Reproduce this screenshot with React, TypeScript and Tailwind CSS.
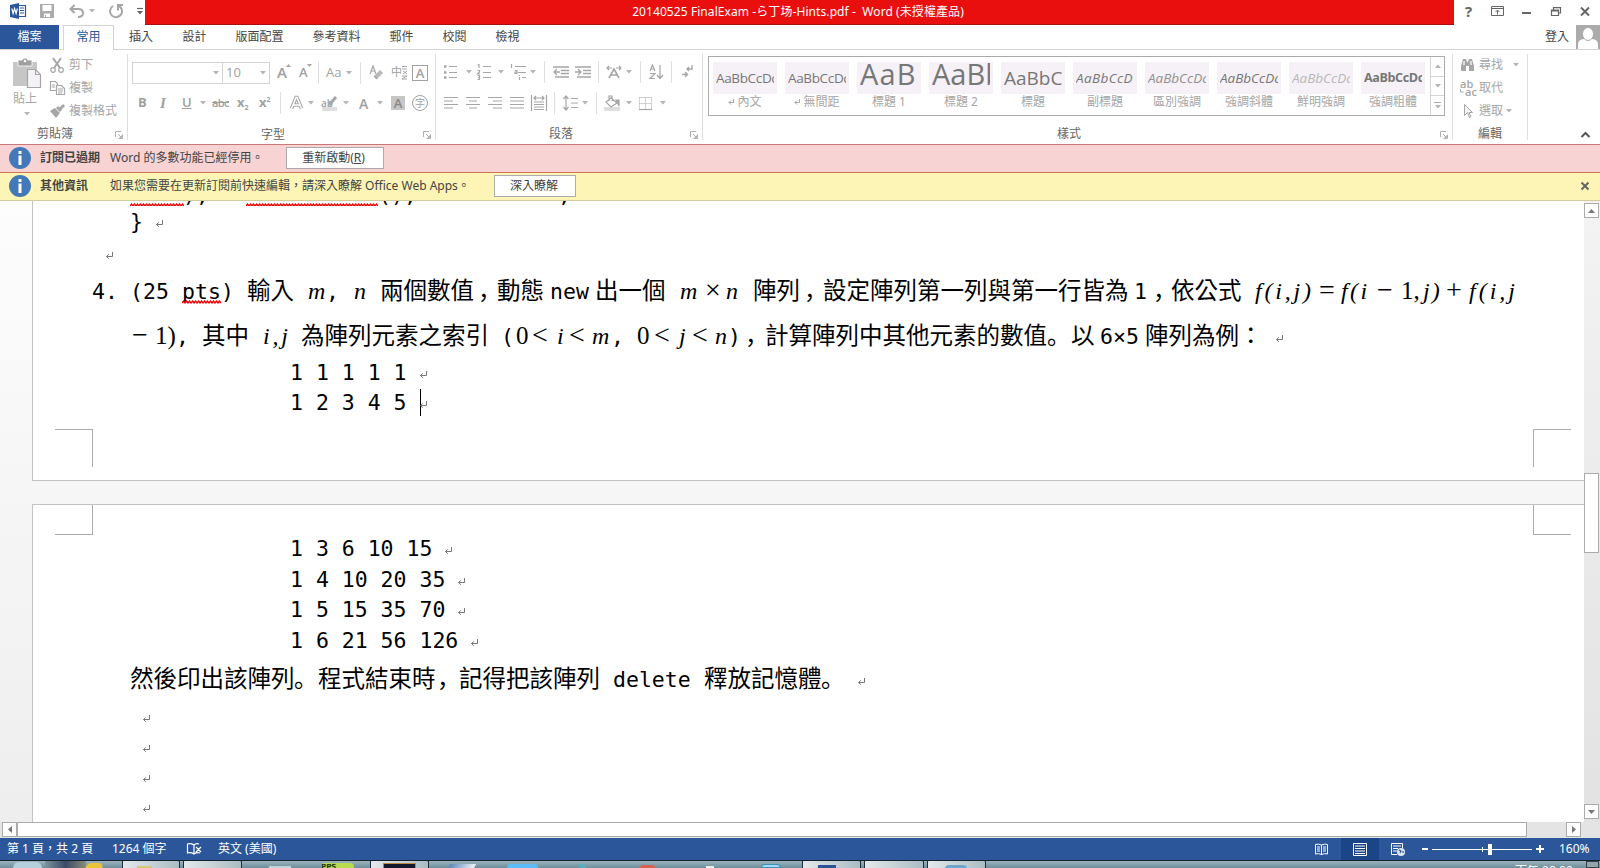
import React from 'react';
import clsx from 'clsx';

// every run of text sits in a cell whose width is the distance to the next one,
// the third entry is the length of a spelling squiggle under it
type Run = [text: string, className: string, squiggle?: number];

const MONO = "font-['DejaVu_Sans_Mono','Noto_Sans_CJK_TC',monospace] text-[21.5px]";
const CJK = "font-['Noto_Sans_CJK_TC',sans-serif] text-[23.5px]";
const PUNCT = "font-['Noto_Sans_CJK_SC',sans-serif] text-[23.5px]";
const MATH = "font-['Liberation_Serif',serif] text-[24px] italic";
const NUM = "font-['Liberation_Serif',serif] text-[25px]";
const OP = "font-['Liberation_Serif',serif] text-[28px]";

const Caret = ({ className = '' }: { className?: string }) => (
  <svg className={clsx('shrink-0', className)} width="6" height="4" viewBox="0 0 6 4">
    <path d="M0 0h6L3 3.5z" fill="#b5b5b5" />
  </svg>
);

const Sep = ({ className = '' }: { className?: string }) => (
  <div className={clsx('h-[22px] w-px shrink-0 bg-[#dedede]', className)} />
);

const Launcher = ({ className = '' }: { className?: string }) => (
  <svg className={clsx('absolute bottom-[1px]', className)} width="8" height="8" viewBox="0 0 8 8" fill="none" stroke="#b0b0b0">
    <path d="M.5 6V.5H6M3 3l3 3M7.5 3.5v4h-4M4.5 6.5h2v-2" />
  </svg>
);

// icon cell: a drawing on its own pixel grid
function Icon({ w, h = 18, className = '', children }: { w: number; h?: number; className?: string; children: React.ReactNode }) {
  return (
    <svg className={clsx('shrink-0 overflow-visible', className)} width={w} height={h} viewBox={`0 0 ${w} ${h}`} fill="none" stroke="#a6a6a6" strokeWidth="1.2">
      {children}
    </svg>
  );
}

const Return = ({ className = '' }: { className?: string }) => (
  <svg className={clsx('shrink-0', className)} width="8" height="8" viewBox="0 0 8 8" fill="none" stroke="#777">
    <path d="M6.5 0v4.5h-6M2.800 2.300L.600 4.500l2.200 2.300" />
  </svg>
);

const Squiggle = ({ length }: { length: number }) => (
  <svg className="absolute bottom-[calc(0.5lh-12px)] left-0" width={length} height="4" viewBox={`0 0 ${length} 4`} fill="none" stroke="#f00000" strokeWidth="1.3">
    <path d={`M0 3${'l1.500-2 1.500 2'.repeat(Math.floor(length / 3))}`} />
  </svg>
);

const Line = ({ runs, className }: { runs: Run[]; className: string }) => (
  <div className={clsx('flex items-baseline whitespace-pre', className)}>
    {runs.map(([text, cls, squiggle], i) =>
      text === '↵' ? (
        <Return key={i} className="-translate-y-px" />
      ) : (
        <span key={i} className={clsx('relative shrink-0', cls)}>
          {text}
          {squiggle && <Squiggle length={squiggle} />}
        </span>
      )
    )}
  </div>
);

// only the feet of this line show under the message bar
const scrolledOut: Run[] = [
  [' ', `${MONO} w-[53px]`, 54],
  [');', `${MONO} w-[63px]`],
  [' ', `${MONO} w-[132px]`, 132],
  ['();', `${MONO} w-[180px]`],
  [';', MONO],
];

const formula: Run[] = [
  ['4.', `${MONO} w-[38px]`],
  ['(25 ', `${MONO} w-[52px]`],
  ['pts', `${MONO} w-[39px]`, 40],
  [')', `${MONO} w-[26px]`],
  ['輸入', `${CJK} w-[61px]`],
  ['m', `${MATH} w-[18px]`],
  [',', `${MONO} w-[28px]`],
  ['n', `${MATH} w-[26px]`],
  ['兩個數值', `${CJK} w-[98px]`],
  ['，', `${PUNCT} w-[19px]`],
  ['動態', `${CJK} w-[53px]`],
  ['new', `${MONO} w-[45px]`],
  ['出一個', `${CJK} w-[85px]`],
  ['m', `${MATH} w-[25px]`],
  ['×', `${OP} w-[21px]`],
  ['n', `${MATH} w-[27px]`],
  ['陣列', `${CJK} w-[51px]`],
  ['，', `${PUNCT} w-[19px]`],
  ['設定陣列第一列與第一行皆為', `${CJK} w-[311px]`],
  ['1', `${MONO} w-[19px]`],
  ['，', `${PUNCT} w-[18px]`],
  ['依公式', `${CJK} w-[84px]`],
  ['f(i,j)', `${MATH} w-[64px] tracking-[2.8px]`],
  ['=', `${OP} w-[22px]`],
  ['f(i', `${MATH} w-[36px] tracking-[2.4px]`],
  ['−', `${OP} w-[24px]`],
  ['1,', `${NUM} w-[22px]`],
  ['j)', `${MATH} w-[23px] tracking-[2px]`],
  ['+', `${OP} w-[23px]`],
  ['f(i,j', `${MATH} tracking-[3px]`],
];

const condition: Run[] = [
  ['−', `${OP} w-[23px]`],
  ['1)', `${NUM} w-[21px]`],
  [',', `${MONO} w-[26px]`],
  ['其中', `${CJK} w-[61px]`],
  ['i,j', `${MATH} w-[38px] tracking-[2.8px]`],
  ['為陣列元素之索引', `${CJK} w-[200px]`],
  ['(', `${MONO} w-[15px]`],
  ['0', `${NUM} w-[16px]`],
  ['<', `${OP} w-[25px]`],
  ['i', `${MATH} w-[12px]`],
  ['<', `${OP} w-[23px]`],
  ['m', `${MATH} w-[19px]`],
  [',', `${MONO} w-[26px]`],
  ['0', `${NUM} w-[17px]`],
  ['<', `${OP} w-[25px]`],
  ['j', `${MATH} w-[13px]`],
  ['<', `${OP} w-[23px]`],
  ['n', `${MATH} w-[13px]`],
  [')', `${MONO} w-[17px]`],
  ['，', `${PUNCT} w-[20px]`],
  ['計算陣列中其他元素的數值', `${CJK} w-[282px]`],
  ['。', `${PUNCT} w-[24px]`],
  ['以', `${CJK} w-[29px]`],
  ['6×5', `${MONO} w-[45px]`],
  ['陣列為例：', `${CJK} w-[131px]`],
  ['↵', ''],
];

const closing: Run[] = [
  ['然後印出該陣列', `${CJK} w-[164px]`],
  ['。', `${PUNCT} w-[24px]`],
  ['程式結束時', `${CJK} w-[119px]`],
  ['，', `${PUNCT} w-[22px]`],
  ['記得把該陣列', `${CJK} w-[154px]`],
  ['delete', `${MONO} w-[91px]`],
  ['釋放記憶體', `${CJK} w-[117px]`],
  ['。', `${PUNCT} w-[37px]`],
  ['↵', ''],
];

const tabs = [
  { label: '插入', cls: 'w-[54px]' },
  { label: '設計', cls: 'w-[53px]' },
  { label: '版面配置', cls: 'w-[77px]' },
  { label: '參考資料', cls: 'w-[77px]' },
  { label: '郵件', cls: 'w-[53px]' },
  { label: '校閱', cls: 'w-[53px]' },
  { label: '檢視', cls: 'w-[53px]' },
];

const styles = [
  { sample: 'AaBbCcDc', name: '內文', mark: true, cls: 'text-[13.5px] leading-[32px]' },
  { sample: 'AaBbCcDc', name: '無間距', mark: true, cls: 'text-[13.5px] leading-[32px]' },
  { sample: 'AaB', name: '標題 1', cls: 'text-[29px] tracking-[1.2px] leading-[24px]' },
  { sample: 'AaBb', name: '標題 2', cls: 'text-[29px] tracking-[0px] leading-[24px]' },
  { sample: 'AaBbC', name: '標題', cls: 'text-[19px] tracking-[0px] leading-[32px]' },
  { sample: 'AaBbCcD', name: '副標題', cls: 'text-[13.5px] italic tracking-[0.4px] leading-[32px]' },
  { sample: 'AaBbCcDc', name: '區別強調', cls: 'text-[13.5px] italic tracking-[0px] text-[#909090] leading-[32px]' },
  { sample: 'AaBbCcDc', name: '強調斜體', cls: 'text-[13.5px] italic tracking-[0px] leading-[32px]' },
  { sample: 'AaBbCcDc', name: '鮮明強調', cls: 'text-[13.5px] italic tracking-[0px] text-[#b8b8b8] leading-[32px]' },
  { sample: 'AaBbCcDc', name: '強調粗體', cls: 'text-[12.5px] font-bold tracking-[-0.35px] leading-[32px]' },
];

function TitleBar() {
  return (
    <div className="flex h-[25px]">
      <div className="flex w-[145px] items-center pb-[3px] pl-[10px]">
        <Icon w={16} h={16} className="mr-[14px]">
          <path d="M8 2.5h7.5v11H8M10 5h4M10 7.5h4M10 10h4" stroke="#2b579a" />
          <path d="M0 2l9-2v16l-9-2z" fill="#2b579a" stroke="none" />
          <path d="M1.8 5.5l1.3 5 1.5-5 1.5 5 1.3-5" stroke="#fff" />
        </Icon>
        <Icon w={14} h={14} className="mr-[15px]">
          <path d="M0 0h14v14H0z" fill="#ababab" stroke="none" />
          <path d="M2.500 1h9v6h-9zM4 9.500h6v3.500H6v-2H5v2H4z" fill="#fff" stroke="none" />
        </Icon>
        <Icon w={15} h={14} className="mr-[5px]">
          <path d="M5.5 1L1.5 5l4 4M2 5h7q5 0 5 4t-5 4" stroke="#a6a6a6" strokeWidth="2" />
        </Icon>
        <Caret className="mr-[14px]" />
        <Icon w={14} h={14} className="mr-[14px]">
          <path d="M4 2A6 6 0 1 0 9 1.5M9 6.5V1h5" stroke="#a6a6a6" strokeWidth="2" />
        </Icon>
        <Icon w={6} h={7}>
          <path d="M0 .5h6" stroke="#666" />
          <path d="M0 3h6L3 6.500z" fill="#666" stroke="none" />
        </Icon>
      </div>
      <div className="w-[1309px] border-b border-[#a81010] bg-[#ea0f0f] pr-[3px] text-center text-[12px] leading-[23px] tracking-[0.08px] text-white">
        20140525 FinalExam -ら丁场-Hints.pdf -&nbsp; Word (未授權產品)
      </div>
      <div className="flex flex-1 items-center pb-[3px] pl-[11px]">
        <span className="w-[26px] text-[15px] font-bold text-[#666]">?</span>
        <Icon w={13} h={10} className="mr-[18px]">
          <path d="M.5.5h12v9H.5zM.5 2.500h12M6.500 8.500V4.500M4.500 6l2-2 2 2" stroke="#666" strokeWidth="1" />
        </Icon>
        <Icon w={9} h={10} className="mr-[20px]"><path d="M0 7h9" stroke="#666" strokeWidth="2" /></Icon>
        <Icon w={10} h={9} className="mr-[19px]">
          <path d="M.5 3h7v5.500h-7zM.5 4h7M2.500 3V.7h7V6H7.500" stroke="#666" />
        </Icon>
        <Icon w={10} h={9}><path d="M1 .5l8 8M9 .5l-8 8" stroke="#666" strokeWidth="2" /></Icon>
      </div>
    </div>
  );
}

function Tabs() {
  return (
    <div className="flex h-[25px] border-b border-[#d4d4d4] text-[12px] leading-[23px] text-[#444]">
      <div className="w-[59px] bg-[#2b579a] text-center text-white">檔案</div>
      <div className="ml-1 h-[25px] w-[51px] border border-b-0 border-[#d4d4d4] bg-white text-center leading-[22px] text-[#2b579a]">常用</div>
      {tabs.map((t) => (
        <div key={t.label} className={clsx('text-center', t.cls)}>{t.label}</div>
      ))}
      <div className="ml-auto w-[31px]">登入</div>
      <svg width="24" height="24" viewBox="0 0 24 24">
        <path d="M0 0h24v24H0z" fill="#ababab" />
        <path d="M2 24v-4q0-6 6-6h8q6 0 6 6v4z" fill="#fff" />
        <ellipse cx="12" cy="9" rx="5.500" ry="6.500" fill="#fff" stroke="#ababab" />
      </svg>
    </div>
  );
}

const GroupLabel = ({ children, className = '' }: { children: string; className?: string }) => (
  <div className={clsx('absolute inset-x-0 bottom-[-2px] text-center text-[12px] leading-[16px] text-[#666]', className)}>{children}</div>
);

function Clipboard() {
  return (
    <div className="relative flex w-[128px] border-r border-[#dedede] text-[12px] text-[#a6a6a6]">
      <div className="flex w-[50px] flex-col items-center pt-[4px]">
        <Icon w={28} h={30} className="ml-[4px]">
          <path d="M0 4h24v24H0z" fill="#c6c6c6" stroke="none" />
          <path d="M5 2h4q3-4 6 0h4v6H5z" fill="#a0a0a0" stroke="#fff" strokeWidth=".8" />
          <circle cx="12" cy="3" r="1.300" fill="#fff" stroke="none" />
          <path d="M14.500 11.500h8l5 5v13h-13z" fill="#f5f2f7" stroke="#a6a6a6" />
          <path d="M22.500 11.500v5h5" />
        </Icon>
        <span className="mt-[3px] leading-[16px]">貼上</span>
        <Caret className="mt-[5px] ml-[3px]" />
      </div>
      <div className="flex flex-col">
        <div className="flex h-[22px] items-center leading-[20px]">
          <Icon w={14} h={15} className="mr-[5px]">
            <path d="M3 0l7 10M11 0L4 10" strokeWidth="2" />
            <circle cx="3" cy="12" r="2.300" /><circle cx="11" cy="12" r="2.300" />
          </Icon>
          剪下
        </div>
        <div className="flex h-[23px] items-center leading-[20px]">
          <Icon w={15} h={14} className="mr-[4px]">
            <path d="M.5.500h5l2 2v7h-7zM2 4h3M2 6h3" />
            <path d="M6.500 4.500h5l3 3v6h-8z" fill="#fff" /><path d="M8 8h5M8 10h5M8 12h4" />
          </Icon>
          複製
        </div>
        <div className="flex h-[23px] items-center leading-[20px]">
          <Icon w={15} h={14} className="mr-[4px]">
            <path d="M0 7l5-3 5 5-4 5z" fill="#a6a6a6" stroke="none" /><path d="M7 3l4 4M10 5l4-4" strokeWidth="3" />
          </Icon>
          複製格式
        </div>
      </div>
      <GroupLabel className="pr-[17px]">剪貼簿</GroupLabel>
      <Launcher className="right-[4px]" />
    </div>
  );
}

function FontGroup() {
  return (
    <div className="relative w-[308px] border-r border-[#dedede] pl-[4px] pt-[7px] font-['Open_Sans','Noto_Sans_CJK_TC',sans-serif] text-[#a0a0a0]">
      <div className="flex h-[23px] items-center">
        <div className="flex h-[22px] w-[91px] items-center justify-end border border-[#d4d4d4] pr-[3px]"><Caret /></div>
        <div className="-ml-px flex h-[22px] w-[48px] items-center justify-between border border-[#d4d4d4] pl-[3px] pr-[3px] text-[13px]">10<Caret /></div>
        <span className="relative ml-[7px] w-[22px] text-[15px] font-semibold">A<Icon w={5} h={4} className="absolute left-[9px] top-[3px]"><path d="M0 3h5L2.500 0z" fill="#a6a6a6" stroke="none" /></Icon></span>
        <span className="relative w-[19px] text-[13px] font-semibold">A<Icon w={5} h={4} className="absolute left-[8px] top-[1px]"><path d="M0 0h5L2.500 3z" fill="#a6a6a6" stroke="none" /></Icon></span>
        <Sep className="mr-[7px]" />
        <span className="w-[20px] text-[13px]">Aa</span>
        <Caret className="mr-[8px]" />
        <Sep className="mr-[8px]" />
        <Icon w={14} h={16} className="mr-[8px]">
          <path d="M1 9l3-8 3 8M2 6h4" /><path d="M5 11l6-6 3 3-6 6z" fill="#b8b8b8" stroke="none" /><path d="M5 11l3 3" />
        </Icon>
        <span className="w-[11px] text-[11px]">中</span>
        <Icon w={5} h={14} className="mr-[5px]"><path d="M0 .500h5M0 3h5M1 5l4 3M5 5L1 8M0 10h5l-5 3h5" strokeWidth="1" /></Icon>
        <span className="h-[16px] w-[16px] border border-[#a0a0a0] text-center text-[13px] font-semibold leading-[14px]">A</span>
      </div>
      <div className="mt-[8px] flex h-[22px] items-center text-[13px]">
        <span className="ml-[6px] w-[22px] font-bold">B</span>
        <span className="w-[22px] font-['Liberation_Serif',serif] text-[15px] font-bold italic">I</span>
        <span className="w-[18px] font-semibold underline">U</span>
        <Caret className="mr-[6px]" />
        <span className="w-[25px] text-[11px] font-semibold tracking-[-0.6px] line-through">abc</span>
        <span className="w-[22px] font-bold">x<span className="align-[-3px] text-[7px]">2</span></span>
        <span className="w-[21px] font-bold">x<span className="align-[5px] text-[7px]">2</span></span>
        <Sep className="mr-[9px]" />
        <Icon w={13} h={14} className="mr-[5px]"><path d="M1.500 12.500L6 1.500h1l4.500 11M3.500 9h6" strokeWidth="3.600" /><path d="M1.500 12.500L6 1.500h1l4.500 11M3.500 9h6" stroke="#fff" strokeWidth="1.500" /></Icon>
        <Caret className="mr-[7px]" />
        <span className="relative w-[22px] text-[10px] font-semibold leading-[20px]">
          ab
          <Icon w={17} h={16} className="absolute left-0 top-[3px]"><path d="M1 11h15v4H1z" fill="#dedede" stroke="none" /><path d="M15 1L8 9" strokeWidth="3" /></Icon>
        </span>
        <Caret className="mr-[10px]" />
        <span className="w-[18px] text-[14px] font-semibold">A</span>
        <Caret className="mr-[8px]" />
        <span className="mr-[7px] h-[14px] w-[14px] bg-[#c6c6c6] text-center text-[13px] font-semibold leading-[14px] text-[#888]">A</span>
        <span className="h-[16px] w-[16px] rounded-full border border-[#a0a0a0] text-center text-[10px] leading-[14px]">字</span>
      </div>
      <GroupLabel className="pr-[17px] font-['Noto_Sans_CJK_TC',sans-serif]">字型</GroupLabel>
      <Launcher className="right-[4px]" />
    </div>
  );
}

function ParagraphGroup() {
  return (
    <div className="relative w-[267px] border-r border-[#dedede] pl-[8px] pt-[6px]">
      <div className="flex h-[23px] items-center">
        <Icon w={14} h={16} className="mr-[8px]">
          <path d="M5 2.500h8M5 8.500h8M5 13.500h8" /><path d="M0 2.500h2.500M0 8.500h2.500M0 13.500h2.500" strokeWidth="2.500" />
        </Icon>
        <Caret className="mr-[5px]" />
        <Icon w={14} h={16} className="mr-[7px]">
          <path d="M6 2.500h8M6 8.500h8M6 13.500h8M2 0v4M.500 1h1M.500 6.500h2v1.500l-2 2h2.500M.500 11.500h2v4h-2M1 13.500h1" />
        </Icon>
        <Caret className="mr-[6px]" />
        <Icon w={17} h={16} className="mr-[3px]">
          <path d="M1.500 0v4M5 2.500h11M8 8.500h8M12 13.500h4M5 6.500h2v3H5V8h2M9.500 11v1M9.500 13v3" />
        </Icon>
        <Caret className="mr-[8px]" />
        <Sep className="mr-[8px]" />
        <Icon w={16} h={12} className="mr-[6px]"><path d="M0 1h16M8 4.500h8M8 7.500h8M2 11h14M7 6H1M4 3L1 6l3 3" strokeWidth="1.300" /></Icon>
        <Icon w={16} h={12} className="mr-[7px]"><path d="M0 1h16M8 4.500h8M8 7.500h8M2 11h14M0 6h6M3 3l3 3-3 3" strokeWidth="1.300" /></Icon>
        <Sep className="mr-[7px]" />
        <Icon w={16} h={14} className="mr-[4px]"><path d="M3 13L8 4l5 9M5 10h6" strokeWidth="1.600" /><path d="M1 3h5M3 1L1 3l2 2M15 3h-5M13 1l2 2-2 2" /></Icon>
        <Caret className="mr-[8px]" />
        <Sep className="mr-[9px]" />
        <Icon w={14} h={16} className="mr-[7px]"><path d="M0 7l2.500-6L5 7M1 5h3M0 9.500h5l-5 5h5M10 1v13M7 11l3 3.500 3-3.500" /></Icon>
        <Sep className="mr-[10px]" />
        <Icon w={11} h={14}><path d="M10 0v4H5M7 2L5 4l2 2M0 9.500h5M3 7l2.500 2.500L3 12" strokeWidth="1.400" /></Icon>
      </div>
      <div className="mt-[9px] flex h-[22px] items-center">
        <Icon w={14} h={12} className="mr-[8px]"><path d="M0 .500h14M0 4h9M0 7.500h14M0 11h9" /></Icon>
        <Icon w={14} h={12} className="mr-[8px]"><path d="M0 .500h14M3 4h8M0 7.500h14M3 11h8" /></Icon>
        <Icon w={14} h={12} className="mr-[8px]"><path d="M0 .500h14M5 4h9M0 7.500h14M5 11h9" /></Icon>
        <Icon w={14} h={12} className="mr-[7px]"><path d="M0 .500h14M0 4h14M0 7.500h14M0 11h14" /></Icon>
        <Icon w={16} h={16} className="mr-[7px]"><path d="M.500 0v16M15.500 0v16M3 3h10M5 1L3 3l2 2M11 1l2 2-2 2M3 7h10M3 9.500h10M3 12h10M3 14.500h10" /></Icon>
        <Sep className="mr-[8px]" />
        <Icon w={15} h={16} className="mr-[4px]"><path d="M3 1v14M.500 4L3 1l2.500 3M.500 12L3 15l2.500-3M8 3.500h7M8 8h7M8 12.500h7" /></Icon>
        <Caret className="mr-[8px]" />
        <Sep className="mr-[7px]" />
        <Icon w={16} h={16} className="mr-[6px]">
          <path d="M0 12h16v4H0z" fill="#dedede" stroke="none" /><path d="M2 7l5-4 6 5-6 4zM5 6V1h3v5" /><path d="M12 5l3 6V5z" fill="#a6a6a6" />
        </Icon>
        <Caret className="mr-[7px]" />
        <Icon w={13} h={13} className="mr-[8px]"><path d="M.500.500h12v12M.500.500v12M6.500.500v12M.500 6.500h12" strokeDasharray="1 1" strokeWidth="1" /><path d="M0 12.500h13" /></Icon>
        <Caret />
      </div>
      <GroupLabel className="pr-[16px]">段落</GroupLabel>
      <Launcher className="right-[4px]" />
    </div>
  );
}

function StylesGroup() {
  return (
    <div className="relative w-[750px] border-r border-[#dedede] pl-[5px] pt-[2px]">
      <div className="flex h-[60px] w-[737px] border border-[#ababab] pl-[4px] pt-[5px]">
        {styles.map((s) => (
          <div key={s.name} className="mr-[8px] w-[64px] text-center text-[12px] leading-[16px] text-[#a6a6a6]">
            <div className="h-[32px] bg-[#f5f1f7] px-[3px]">
              <div className={clsx("h-[32px] overflow-hidden whitespace-nowrap text-left font-['Open_Sans',sans-serif] text-[#777]", s.mark && 'tracking-[-0.35px]', s.cls)}>{s.sample}</div>
            </div>
            <div className="flex items-center justify-center gap-[3px] whitespace-nowrap">
              {s.mark && <svg width="6" height="6" viewBox="0 0 6 6" fill="none" stroke="#a6a6a6"><path d="M5.500 0v3.500H1M3 1.500l-2 2 2 2" /></svg>}
              {s.name}
            </div>
          </div>
        ))}
        <div className="-mt-[5px] ml-[-3px] flex w-[15px] flex-1 flex-col border-l border-[#d4d4d4]">
          <div className="flex flex-1 items-center justify-center border-b border-[#d4d4d4]"><Caret className="rotate-180" /></div>
          <div className="flex flex-1 items-center justify-center border-b border-[#d4d4d4]"><Caret /></div>
          <div className="flex flex-1 flex-col items-center justify-center gap-[2px]"><div className="h-px w-[7px] bg-[#ababab]" /><Caret /></div>
        </div>
      </div>
      <GroupLabel className="pr-[17px]">樣式</GroupLabel>
      <Launcher className="right-[4px]" />
    </div>
  );
}

function EditGroup() {
  return (
    <div className="relative w-[75px] border-r border-[#dedede] pl-[7px] text-[12px] leading-[20px] text-[#a6a6a6]">
      <div className="flex h-[22px] items-center">
        <Icon w={15} h={14} className="mr-[4px]">
          <path d="M1 8L3 1h3l1 3h1l1-3h3l2 7v5H9V8H6v5H1z" fill="#a6a6a6" stroke="none" /><path d="M4 3v4M11 3v4" stroke="#fff" />
        </Icon>
        尋找<Caret className="ml-[10px]" />
      </div>
      <div className="flex h-[24px] items-center">
        <div className="relative mr-[4px] h-[16px] w-[15px] font-['Open_Sans',sans-serif] text-[11px] font-semibold leading-[8px]">
          <div>ab</div>
          <div className="pl-[5px]">ac</div>
          <Icon w={4} h={5} className="absolute left-0 top-[9px]"><path d="M.500 0v3h3" strokeWidth="1" /></Icon>
        </div>
        取代
      </div>
      <div className="flex h-[22px] items-center">
        <Icon w={9} h={14} className="ml-[4px] mr-[6px]"><path d="M.500.500v11l3-3 2 5 1.500-1-2-4h3.500z" fill="#f7f4f8" strokeWidth="1" /></Icon>
        選取<Caret className="ml-[3px]" />
      </div>
      <GroupLabel>編輯</GroupLabel>
    </div>
  );
}

const Info = () => (
  <svg className="ml-[9px] shrink-0" width="22" height="22" viewBox="0 0 22 22">
    <circle cx="11" cy="11" r="11" fill="#4379b8" />
    <path d="M9.500 4h3v3h-3zM9.500 8.500h3V18h-3z" fill="#fff" />
  </svg>
);

const bracket = 'absolute h-[38px] w-[38px] border-[#ababab]';

function Document() {
  return (
    <div className="flex h-[621px] bg-linear-to-b from-[#fdfdfd] to-[#eeeeee]">
      <div className="flex h-full w-[1584px] flex-col gap-[23px] overflow-hidden pl-[32px]">
        <div className="relative h-[280px] shrink-0 border-b border-l border-[#c3c3c3] bg-white">
          <div className="flex h-[5px] items-end overflow-hidden pl-[97px]">
            <Line className="translate-y-[2px] leading-[26px]" runs={scrolledOut} />
          </div>
          <Line className="h-[31px] pl-[97px] pt-px leading-[30px]" runs={[['}', `${MONO} w-[26px]`], ['↵', '']]} />
          <Line className="h-[30px] pl-[73px] pt-[16px]" runs={[['↵', '']]} />
          <Line className="h-[45px] pl-[59px] leading-[44px]" runs={formula} />
          <Line className="h-[46px] pl-[99px] leading-[44px]" runs={condition} />
          <Line className="h-[30px] pl-[257px] leading-[30px]" runs={[['1 1 1 1 1', `${MONO} w-[130px]`], ['↵', '']]} />
          <div className="flex h-[30px] w-[500px]">
            <Line className="w-[387px] pl-[257px] leading-[30px]" runs={[['1 2 3 4 5', `${MONO} w-[130px]`], ['↵', '']]} />
            <div className="mt-px h-[27px] w-px bg-black" />
          </div>
          <div className={clsx(bracket, 'left-[22px] top-[228px] border-r border-t')} />
          <div className={clsx(bracket, 'right-[13px] top-[228px] border-l border-t')} />
        </div>
        <div className="relative h-[400px] shrink-0 border-l border-t border-[#c3c3c3] bg-white pt-[29px]">
          <Line className="h-[31px] pl-[257px] leading-[30px]" runs={[['1 3 6 10 15', `${MONO} w-[155px]`], ['↵', '']]} />
          <Line className="h-[30px] pl-[257px] leading-[30px]" runs={[['1 4 10 20 35', `${MONO} w-[168px]`], ['↵', '']]} />
          <Line className="h-[31px] pl-[257px] leading-[30px]" runs={[['1 5 15 35 70', `${MONO} w-[168px]`], ['↵', '']]} />
          <Line className="h-[29px] pl-[257px] leading-[30px]" runs={[['1 6 21 56 126', `${MONO} w-[181px]`], ['↵', '']]} />
          <Line className="h-[60px] pl-[97px] leading-[44px]" runs={closing} />
          <div className="flex flex-col gap-[22px] pl-[110px]">
            <Return /><Return /><Return /><Return />
          </div>
          <div className={clsx(bracket, '-top-[8px] left-[22px] border-b border-r [clip-path:inset(8px_0_0_0)]')} />
          <div className={clsx(bracket, '-top-[8px] right-[13px] border-b border-l [clip-path:inset(8px_0_0_0)]')} />
        </div>
      </div>
      <div className="flex w-[16px] flex-col bg-linear-to-b from-[#f3f3f3] to-[#e2e2e2] py-[2px]">
        <div className="flex h-[15px] w-[15px] items-center justify-center border border-[#ababab] bg-white">
          <svg width="7" height="4" viewBox="0 0 7 4"><path d="M0 4h7L3.500 0z" fill="#777" /></svg>
        </div>
        <div className="mt-[255px] h-[80px] w-[15px] border border-[#ababab] bg-white" />
        <div className="mt-auto mb-px flex h-[15px] w-[15px] items-center justify-center border border-[#ababab] bg-white">
          <svg width="7" height="4" viewBox="0 0 7 4"><path d="M0 0h7L3.500 4z" fill="#777" /></svg>
        </div>
      </div>
    </div>
  );
}

function StatusBar() {
  return (
    <div className="flex h-[22px] items-center bg-[#2b579a] pl-[7px] text-[12px] text-white">
      <span className="w-[105px]">第 1 頁，共 2 頁</span>
      <span className="w-[75px]">1264 個字</span>
      <Icon w={15} h={12} className="mr-[16px]">
        <path d="M7 2v9M7 11q-3-2-6.500-1V1Q4 0 7 2q2-2 5-1M7 11q3-2 6-1M9 4l5 5M14 4L9 9" stroke="#fff" />
      </Icon>
      <span>英文 (美國)</span>
      <Icon w={13} h={13} className="ml-auto mr-[13px]">
        <path d="M6.500 2v10M.500 1.500q3-1 6 .500 3-1.500 6-.500v9.500q-3-1-6 .500-3-1.500-6-.500zM2 4h3M2 6h3M2 8h3M8 4h3M8 6h3M8 8h3" stroke="#fff" strokeWidth="1" />
      </Icon>
      <div className="flex h-[22px] w-[38px] items-center justify-center bg-[#1a4587]">
        <Icon w={14} h={13}><path d="M.500.500h13v12H.500zM2 3h10M2 5.500h10M2 8h10M2 10.500h10" stroke="#fff" strokeWidth="1" /></Icon>
      </div>
      <Icon w={14} h={13} className="ml-[12px] mr-[17px]">
        <path d="M6 11.500H.500V.500h11V5M2 3h8M2 5.500h5M2 8h4" stroke="#fff" strokeWidth="1" />
        <circle cx="10" cy="9" r="4" fill="#dce6f5" stroke="none" /><path d="M8 7l2 1-1 2M12 8v2" stroke="#2b579a" />
      </Icon>
      <div className="h-[2px] w-[6px] bg-white" />
      <div className="ml-[4px] flex h-[12px] w-[100px] items-center">
        <div className="h-px w-[50px] bg-white" />
        <div className="h-[5px] w-px bg-white" />
        <div className="h-px w-[5px] bg-white" />
        <div className="h-[11px] w-[4px] bg-white" />
        <div className="h-px flex-1 bg-white" />
      </div>
      <Icon w={8} h={8} className="ml-[4px] mr-[15px]"><path d="M0 4h8M4 0v8" stroke="#fff" strokeWidth="2" /></Icon>
      <span className="w-[41px]">160%</span>
    </div>
  );
}

const taskButton = 'h-[8px] shrink-0 rounded-t-[2px] border border-b-0 border-[#1e2d38] bg-linear-to-r from-[#e3e9ec] to-[#a9bdc3]';

function Taskbar() {
  return (
    <div className="flex h-[8px] items-end overflow-hidden border-t border-[#14202e] bg-linear-to-b from-[#9db3bd] to-[#6d8f9d]">
      <div className="ml-[13px] h-[6px] w-[29px] rounded-t-full bg-[#b4d0de]" />
      <div className="ml-[3px] h-[7px] w-[41px] bg-linear-to-r from-[#7c949e] via-[#3c4a66] to-[#8a8c78]" />
      <div className="h-[5px] w-[17px] -skew-x-12 rounded-t-full bg-[#e9c43c]" />
      <div className={clsx(taskButton, 'ml-[19px] w-[58px]')}><div className="ml-[14px] mt-[5px] h-[2px] w-[15px] bg-[#d8c774]" /></div>
      <div className={clsx(taskButton, 'ml-[3px] w-[59px]')} />
      <div className="ml-[27px] h-[2px] w-[22px] bg-[#c2d4da]" />
      <div className="ml-[30px] flex h-[5px] w-[33px] overflow-hidden rounded-t bg-[#b8dc50] font-['DejaVu_Sans',sans-serif] text-[7px] font-bold leading-[8px] text-[#21310d]">PPS</div>
      <div className={clsx(taskButton, 'ml-[16px] w-[59px]')}><div className="ml-[12px] mt-[2px] h-[6px] w-[33px] border border-[#b98340] bg-[#14182c]" /></div>
      <div className="ml-[20px] h-[4px] w-[26px] -skew-x-[30deg] bg-linear-to-r from-[#5b86b8] to-[#f0f4fa]" />
      <div className="ml-[32px] h-[4px] w-[31px] rounded-t-sm bg-[#5abcf8]" />
      <div className="ml-[41px] h-[4px] w-[6px] skew-x-[40deg] bg-[#58b0bf]" />
      <div className="ml-[55px] h-[3px] w-[15px] rounded-t bg-[#d9604f]" />
      <div className="ml-[51px] h-[2px] w-[8px] bg-[#e9eff1]" />
      <div className="ml-[47px] h-[4px] w-[20px] rounded-t-full border border-[#3a90b8] bg-[#a5dcf4]" />
      <div className={clsx(taskButton, 'ml-[21px] w-[59px]')}><div className="ml-[15px] mt-[4px] h-[4px] w-[18px] bg-[#2b519a]" /></div>
      <div className={clsx(taskButton, 'ml-[3px] w-[60px]')} />
      <div className={clsx(taskButton, 'ml-[3px] w-[59px]')}><div className="ml-[17px] mt-[4px] h-[4px] w-[22px] rounded-t-full bg-[#6fa6cf]" /></div>
      <div className="ml-auto h-[3px] w-[71px] overflow-hidden whitespace-nowrap text-[12px] leading-[12px] text-white">下午 08:00</div>
      <div className="mr-[1px] h-[7px] w-[13px] border border-[#33434b] bg-[#91a5ab]" />
    </div>
  );
}

export default function App() {
  return (
    <div className="h-[868px] w-[1600px] overflow-hidden bg-white font-['Noto_Sans','Noto_Sans_CJK_TC',sans-serif]">
      <TitleBar />
      <Tabs />
      <div className="flex h-[95px] border-b border-[#c9787a] pb-[4px] pt-[4px]">
        <Clipboard />
        <FontGroup />
        <ParagraphGroup />
        <StylesGroup />
        <EditGroup />
        <Icon w={9} h={6} className="ml-auto mr-[10px] mt-[78px]"><path d="M.500 5l4-4 4 4" stroke="#555" strokeWidth="2" /></Icon>
      </div>
      <div className="flex h-[28px] items-center border-b border-[#cf7455] bg-[#f8d3d4] pb-px text-[12px] text-[#444]">
        <Info />
        <span className="ml-[9px] w-[70px] font-bold">訂閱已過期</span>
        <span className="w-[176px]">Word 的多數功能已經停用。</span>
        <div className="h-[22px] w-[98px] border border-[#ababab] bg-white pr-[3px] text-center leading-[19px]">重新啟動(<span className="underline">R</span>)</div>
      </div>
      <div className="flex h-[28px] items-center border-b border-[#d2cb9c] bg-[#fcf5b5] pb-px text-[12px] text-[#444]">
        <Info />
        <span className="ml-[9px] w-[70px] font-bold">其他資訊</span>
        <span className="w-[384px]">如果您需要在更新訂閱前快速編輯，請深入瞭解 Office Web Apps。</span>
        <div className="h-[22px] w-[82px] border border-[#ababab] bg-white pr-[2px] text-center leading-[19px]">深入瞭解</div>
        <Icon w={8} h={8} className="ml-auto mr-[11px]"><path d="M.500.500l7 7M7.500.500l-7 7" stroke="#666" strokeWidth="2" /></Icon>
      </div>
      <Document />
      <div className="flex h-[16px] bg-[#e4e4e4] pl-[2px]">
        <div className="flex h-[15px] w-[15px] items-center justify-center border border-[#ababab] bg-white">
          <svg width="4" height="7" viewBox="0 0 4 7"><path d="M4 0v7L0 3.500z" fill="#777" /></svg>
        </div>
        <div className="h-[15px] w-[1510px] border border-[#ababab] bg-white" />
        <div className="ml-[39px] flex h-[15px] w-[15px] items-center justify-center border border-[#ababab] bg-white">
          <svg width="4" height="7" viewBox="0 0 4 7"><path d="M0 0v7l4-3.500z" fill="#777" /></svg>
        </div>
      </div>
      <StatusBar />
      <Taskbar />
    </div>
  );
}
